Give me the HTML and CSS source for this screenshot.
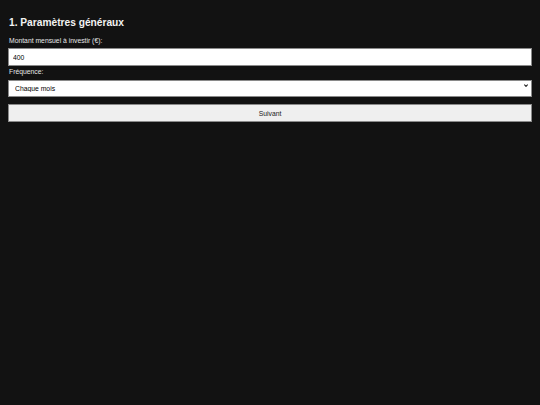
FILE: index.html
```html
<!DOCTYPE html>
<html lang="fr">
<head>
<meta charset="utf-8">
<title>Paramètres</title>
<link rel="stylesheet" href="styles.css">
</head>
<body>
<div class="step">
  <h2 class="title">1. Paramètres généraux</h2>
  <label class="label" for="montant">Montant mensuel à investir (€):</label>
  <input class="field input" id="montant" type="number" value="400">
  <label class="label label-2" for="freq">Fréquence:</label>
  <div class="select-wrap">
    <select class="field select" id="freq">
      <option>Chaque mois</option>
    </select>
    <svg class="chev" viewBox="0 0 4 3" width="4" height="3"><path d="M0.3 0.5 L2 2.4 L3.7 0.5" fill="none" stroke="#222" stroke-width="1.1"/></svg>
  </div>
  <button class="btn" type="button">Suivant</button>
</div>
</body>
</html>
```
FILE: styles.css
```css
html, body {
  background: #121212;
}
body {
  margin: 8px;
  font-family: "Liberation Sans", Arial, sans-serif;
  color: #eeeeee;
}
.step {
  display: flex;
  flex-direction: column;
}
.title {
  font-size: 10.2px;
  font-weight: bold;
  margin: 9px 0 7px 1px;
  line-height: 12px;
  color: #f2f2f2;
}
.label {
  font-size: 6.8px;
  line-height: 9px;
  margin: 0 0 3px 1px;
  color: #e6e6e6;
}
.label-2 {
  margin: 1px 0 1px 1px;
}
.field {
  box-sizing: border-box;
  width: 100%;
  height: 18px;
  margin: 0;
  border: 1px solid #8a8a8a;
  background: #ffffff;
  color: #000;
  font-family: "Liberation Sans", Arial, sans-serif;
  font-size: 6.8px;
  padding: 0 4px;
  outline: none;
  -moz-appearance: textfield;
}
.field::-webkit-inner-spin-button,
.field::-webkit-outer-spin-button {
  -webkit-appearance: none;
  margin: 0;
}
.select-wrap {
  position: relative;
}
.select {
  -webkit-appearance: none;
  appearance: none;
  height: 17px;
  padding-left: 6px;
  border-radius: 0;
}
.chev {
  position: absolute;
  right: 4px;
  top: 7px;
}
.btn {
  box-sizing: border-box;
  width: 100%;
  height: 18px;
  margin: 7px 0 0 0;
  background: #efefef;
  border: 1px solid #8a8a8a;
  color: #222;
  font-family: "Liberation Sans", Arial, sans-serif;
  font-size: 6.8px;
  padding: 0;
}
```
